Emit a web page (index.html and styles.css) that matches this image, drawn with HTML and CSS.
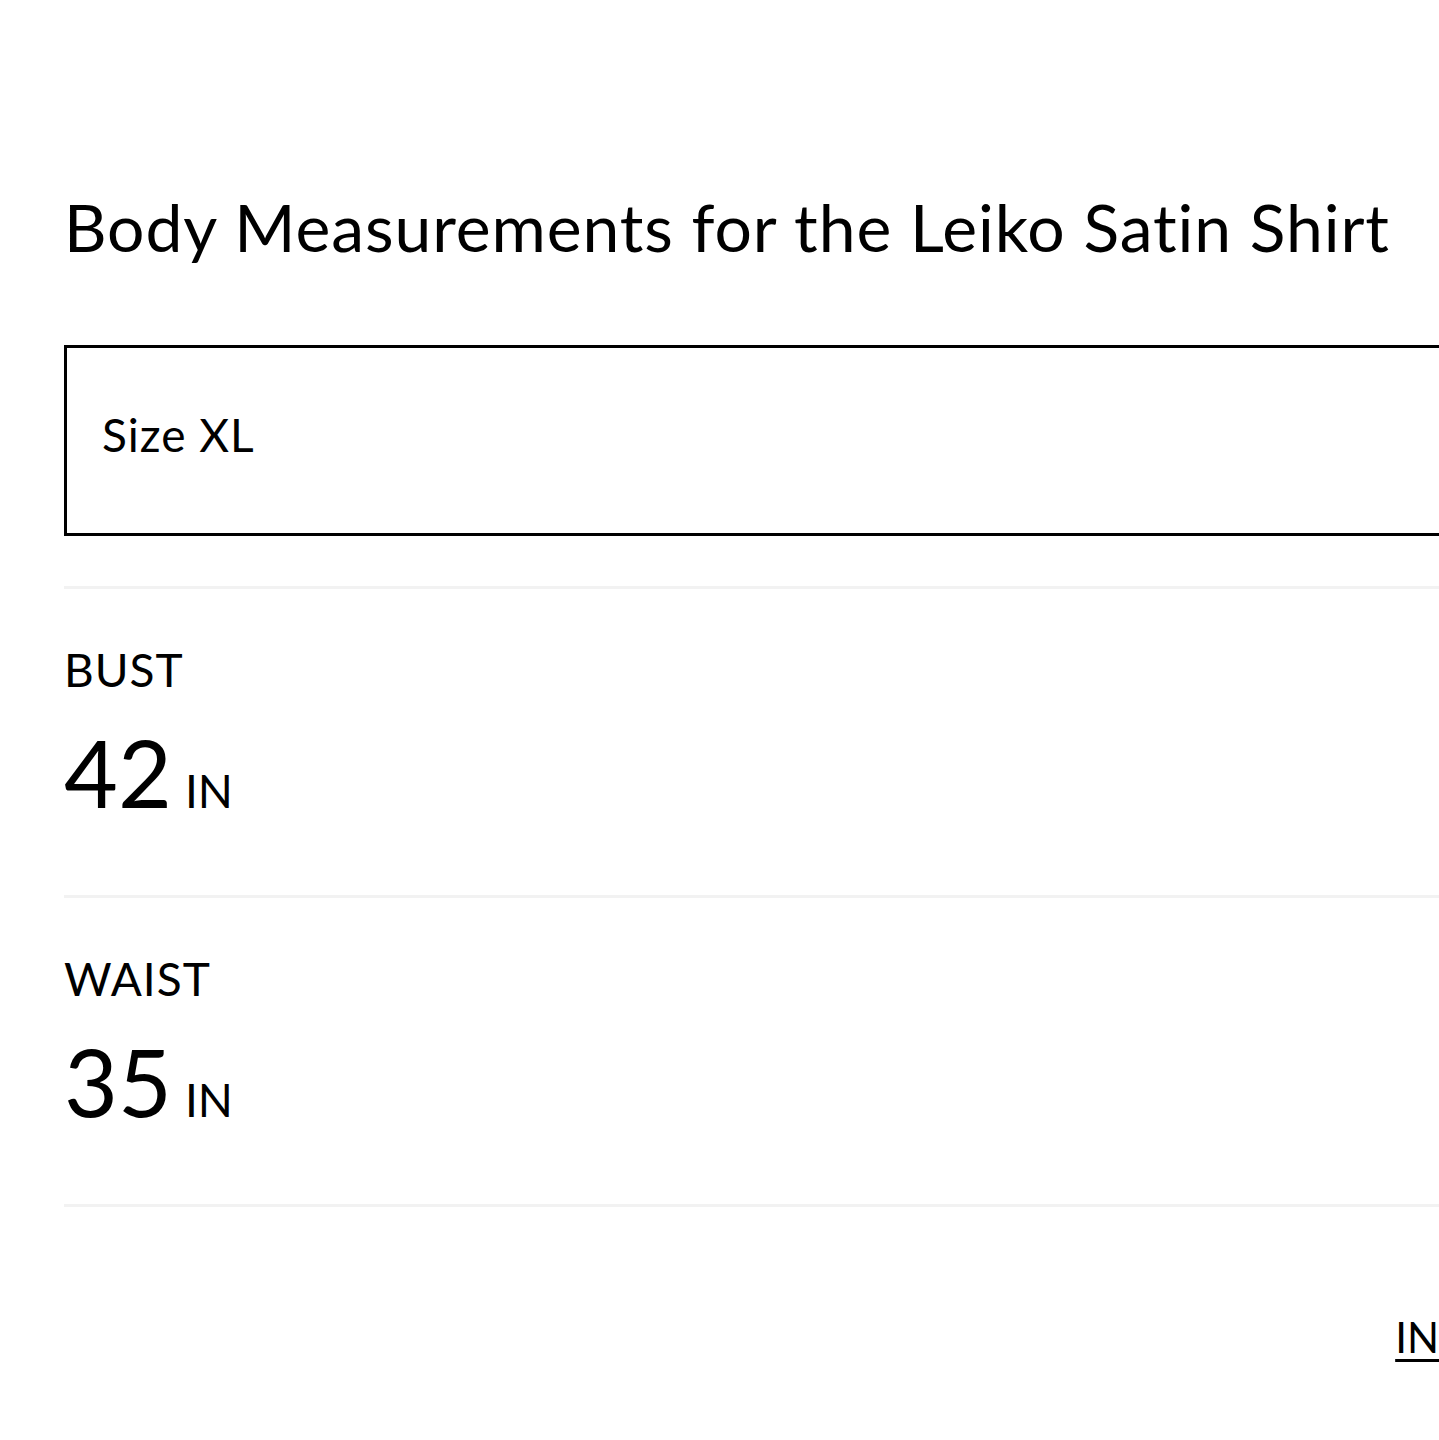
FILE: index.html
```html
<!DOCTYPE html>
<html lang="en">
<head>
    <meta charset="UTF-8">
    <meta name="viewport" content="width=device-width, initial-scale=1.0">
    <title>Size Guide - Leiko Satin Shirt</title>
    <link rel="stylesheet" href="styles.css">
</head>
<body>
    <div class="sheet">
        <h2 class="sheet-title">Body Measurements for the Leiko Satin Shirt</h2>

        <div class="size-select">Size XL</div>

        <div class="measure">
            <div class="measure-label">BUST</div>
            <div class="measure-value">
                <span class="num">42</span>
                <span class="unit">IN</span>
            </div>
        </div>

        <div class="measure">
            <div class="measure-label">WAIST</div>
            <div class="measure-value">
                <span class="num">35</span>
                <span class="unit">IN</span>
            </div>
        </div>

        <div class="unit-toggle">
            <a href="#" class="unit-link active">IN</a>
        </div>
    </div>
</body>
</html>
```
FILE: styles.css
```css
html, body {
    margin: 0;
    padding: 0;
    background: #fff;
    overflow-x: hidden;
}
body {
    font-family: Lato, "Noto Sans", sans-serif;
    font-variant-ligatures: none;
    color: #000;
}
.sheet {
    width: 1375px;
    padding: 194px 0 80px 64px;
}
.sheet-title {
    margin: 0;
    font-size: 66px;
    line-height: 66px;
    font-weight: 400;
    letter-spacing: 0.9px;
    white-space: nowrap;
}
.size-select {
    margin-top: 85px;
    margin-right: -40px;
    border: 3px solid #000;
    padding: 64px 35px 75px;
    font-size: 46px;
    line-height: 46px;
    letter-spacing: 1px;
}
.measure {
    margin-top: 50px;
    border-top: 3px solid #f2f2f2;
    padding: 58px 0 76px;
}
.measure + .measure {
    margin-top: 0;
}
.measure-label {
    font-size: 46px;
    line-height: 46px;
    letter-spacing: 1px;
}
.measure-value {
    display: flex;
    align-items: baseline;
    gap: 13px;
    margin-top: 33px;
}
.num {
    font-size: 93px;
    line-height: 93px;
}
.unit {
    font-size: 46px;
    line-height: 46px;
}
.unit-toggle {
    border-top: 3px solid #f2f2f2;
    padding-top: 109px;
    display: flex;
    justify-content: flex-end;
}
.unit-link {
    color: #000;
    font-size: 42px;
    line-height: 42px;
    text-decoration: underline;
    text-decoration-thickness: 3px;
    text-underline-offset: 6px;
}
```
